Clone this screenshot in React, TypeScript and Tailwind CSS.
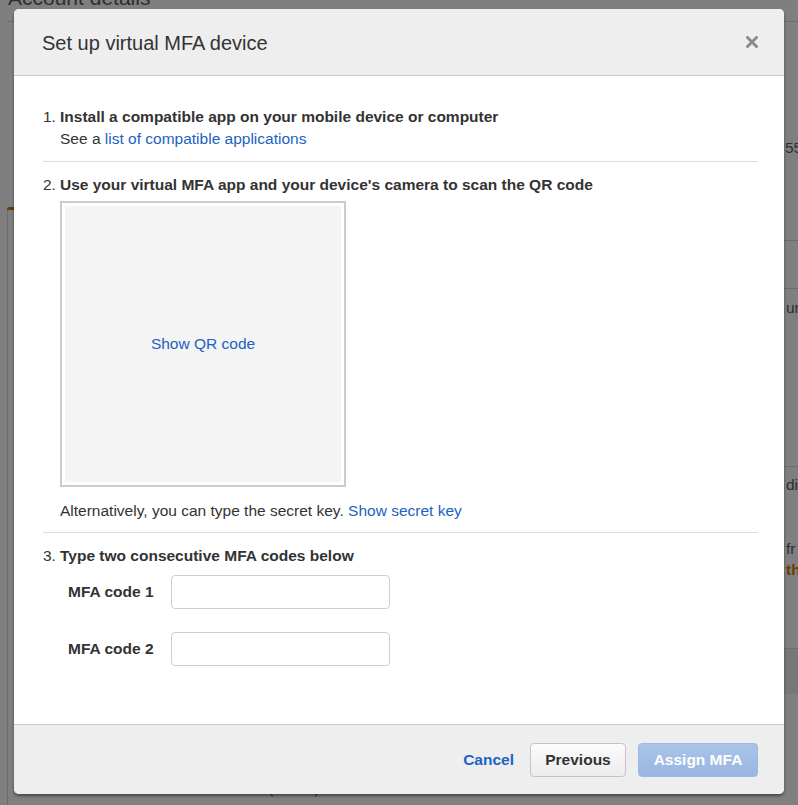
import React from "react";

const font = { fontFamily: '"Liberation Sans", Arial, Helvetica, sans-serif' };

// faded console page sitting behind the dim overlay
function Backdrop() {
  return (
    <div className="flex h-full flex-col text-[#2e2e2e]">
      <div className="ml-[8px] h-[22px] shrink-0 border-b border-[#6c6c6c]">
        <div className="-mt-[13px] text-[21px]">Account details</div>
      </div>
      <div className="flex flex-1">
        <div className="flex w-[8px] shrink-0 flex-col pt-[185px]">
          <div className="ml-[7px] h-[3px] w-[7px] shrink-0 rounded-tl-[2px] bg-[#6a3d00]" />
          <div className="ml-[7px] w-px flex-1 bg-[#6c6c6c]" />
        </div>
        <div className="flex flex-1 flex-col justify-end pb-[9px]">
          <div className="flex gap-[41px] pl-[261px] text-[13px] leading-none">
            <span>(</span>
            <span>)</span>
          </div>
        </div>
        <div className="flex w-[14px] shrink-0 flex-col overflow-hidden whitespace-nowrap">
          <div className="mt-[115px] pl-[1px]">5558</div>
          <div className="mt-[81px] h-px bg-[#6c6c6c]" />
          <div className="mt-[47px] h-px bg-[#6c6c6c]" />
          <div className="mt-[8px] pl-[2px]">ur</div>
          <div className="mt-[147px] h-px bg-[#6c6c6c]" />
          <div className="mt-[7px] pl-[2px]">di</div>
          <div className="mt-[42px] pl-[2px] leading-[21px]">fr</div>
          <div className="pl-[2px] font-bold text-[#6a3d00]">th</div>
          <div className="mt-[67px] h-[46px] border-t border-[#6c6c6c] bg-[#777777]" />
        </div>
      </div>
    </div>
  );
}

function Step({ n, children }: { n: string; children: React.ReactNode }) {
  return (
    <div className="flex">
      <span className="w-[17px] shrink-0">{n}</span>
      <span className="font-bold">{children}</span>
    </div>
  );
}

function CodeRow({ label }: { label: string }) {
  return (
    <div className="flex items-center">
      <label className="w-[111px] pl-[8px] font-bold text-[#333]">{label}</label>
      <input
        type="text"
        className="h-[34px] w-[219px] rounded-[4px] border border-[#cfcfcf] bg-white px-2 outline-none"
      />
    </div>
  );
}

export default function App() {
  return (
    <div
      className="relative h-[805px] w-[798px] overflow-hidden bg-[#7f7f7f] text-[15.5px] leading-[22px]"
      style={font}
    >
      <Backdrop />

      <div className="absolute left-[14px] top-[9px] flex h-[785px] w-[770px] flex-col overflow-hidden rounded-[5px] bg-white shadow-[0_2px_3px_rgba(0,0,0,0.45)]">
        <div className="flex h-[67px] shrink-0 items-center justify-between border-b border-[#cccccc] bg-[#eeeeee] pl-[28px] pr-[26px]">
          <h2 className="mt-[1px] text-[20px] text-[#333]">Set up virtual MFA device</h2>
          <svg width="12" height="12" viewBox="0 0 12 12" className="mb-[1px]">
            <path d="M1.5 1.5L10.5 10.5M10.5 1.5L1.5 10.5" stroke="#8a8a8a" strokeWidth="3" strokeLinecap="round" />
          </svg>
        </div>

        <div className="flex-1 pl-[29px] pr-[26px] pt-[30px] text-[#333]">
          <div className="border-b border-[#dddddd] pb-[11px]">
            <Step n="1.">Install a compatible app on your mobile device or computer</Step>
            <div className="pl-[17px]">
              See a <a className="text-[#2162c2]">list of compatible applications</a>
            </div>
          </div>

          <div className="border-b border-[#dddddd] pb-[10px] pt-[12px]">
            <Step n="2.">Use your virtual MFA app and your device's camera to scan the QR code</Step>
            <div className="ml-[17px] mt-[5px] h-[286px] w-[286px] border-2 border-[#cccccc] bg-white p-[3px]">
              <div className="flex h-full w-full items-center justify-center bg-[#f4f4f4]">
                <a className="text-[#2162c2]">Show QR code</a>
              </div>
            </div>
            <div className="mt-[13px] pl-[17px]">
              Alternatively, you can type the secret key. <a className="text-[#2162c2]">Show secret key</a>
            </div>
          </div>

          <div className="pt-[12px]">
            <Step n="3.">Type two consecutive MFA codes below</Step>
            <div className="ml-[17px] mt-[8px] flex flex-col gap-[23px]">
              <CodeRow label="MFA code 1" />
              <CodeRow label="MFA code 2" />
            </div>
          </div>
        </div>

        <div className="flex h-[70px] shrink-0 items-center justify-end gap-[12px] border-t border-[#cccccc] bg-[#eeeeee] pr-[26px] text-[15.5px] font-bold">
          <a className="mr-[4px] text-[#2162c2]">Cancel</a>
          <button className="h-[34px] w-[96px] rounded-[4px] border border-[#c4c4c4] bg-gradient-to-b from-[#fcfcfc] to-[#ececec] text-[#333]">
            Previous
          </button>
          <button className="h-[34px] w-[120px] rounded-[4px] border border-[#9cb9e3] bg-gradient-to-b from-[#aac4e8] to-[#98b6e1] text-white">
            Assign MFA
          </button>
        </div>
      </div>
    </div>
  );
}
